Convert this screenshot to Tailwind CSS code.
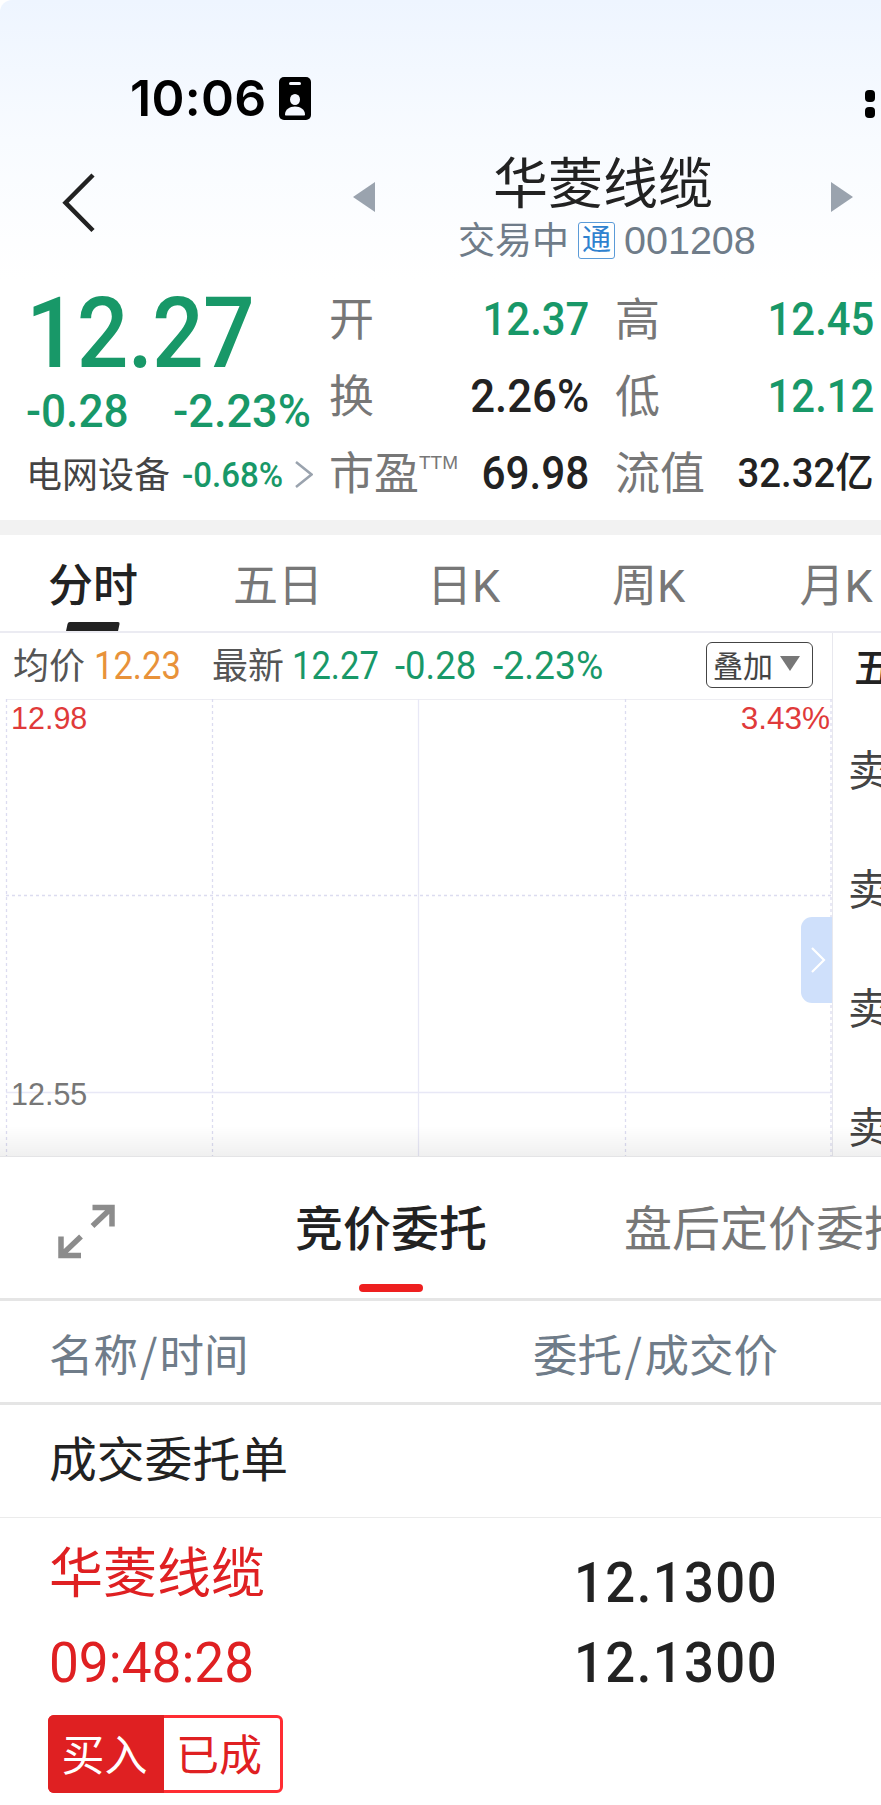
<!DOCTYPE html>
<html lang="zh-CN">
<head>
    <meta charset="UTF-8">
    <meta name="viewport" content="width=device-width, initial-scale=1.0">
    <title>华菱线缆 001208</title>
    <script src="https://cdn.jsdelivr.net/npm/@tailwindcss/browser@4"></script>
</head>
<body class="w-[881px] h-[1805px] overflow-hidden bg-white text-[#222] leading-none whitespace-nowrap font-['Roboto','Noto_Sans_CJK_SC',sans-serif]">

    <!-- Header -->
    <header class="h-[280px] rounded-tl-[12px] bg-linear-to-b from-[#eef5ff] via-[#f8fbff] via-50% to-white">
        <!-- Status bar -->
        <div class="h-[150px] pt-[46px] pl-[130px] pr-[6px] flex items-center text-black">
            <span class="w-[149px] text-[50px] font-semibold font-['Inter',sans-serif] tracking-[0.3px]">10:06</span>
            <svg class="w-8 h-[43px]" viewBox="0 0 32 43">
                <rect width="32" height="43" rx="5"></rect>
                <rect x="10" y="5" width="12" height="3" rx="1.5" fill="#f5f8ff"></rect>
                <ellipse cx="16" cy="22.5" rx="5" ry="5.5" fill="#f5f8ff"></ellipse>
                <path d="M6 37.5c0-5 4.500-8 10-8s10 3 10 8c0 .6-.4 1-1 1H7c-.6 0-1-.4-1-1z" fill="#f5f8ff"></path>
            </svg>
            <div class="ml-auto mt-[12px] flex flex-col gap-[5px]">
                <i class="w-[10px] h-3 rounded-[4px] bg-black"></i>
                <i class="w-[10px] h-[11px] rounded-[4px] bg-black"></i>
            </div>
        </div>
        <!-- Title -->
        <div class="h-[120px] flex">
            <svg class="mt-[23px] ml-[61px] w-[34px] h-[60px]" viewBox="0 0 34 60" fill="none" stroke="#222" stroke-width="4.500">
                <path d="M32 2 4.500 29.700 32 57.500"></path>
            </svg>
            <svg class="mt-8 ml-[258px] w-[22px] h-[30px]" viewBox="0 0 22 30"><path d="M22 0v30L0 15z" fill="#9aa3ae"></path></svg>
            <div class="w-[456px] pl-[83px]">
                <h1 class="mt-[7px] pl-[35px] text-[55px]">华菱线缆</h1>
                <div class="mt-[9px] flex items-center text-[37px] text-[#6f7c89]">
                    <span class="mt-[2px]">交易中</span>
                    <span class="ml-[9px] w-[37px] h-[37px] border border-[#5b9bd8] rounded-[3px] bg-white flex items-center justify-center text-[29px] text-[#2f82cf]">通</span>
                    <span class="ml-[9px] text-[39.500px] font-['Liberation_Sans',sans-serif]">001208</span>
                </div>
            </div>
            <svg class="mt-8 w-[22px] h-[30px]" viewBox="0 0 22 30"><path d="M0 0v30l22-15z" fill="#9aa3ae"></path></svg>
        </div>
    </header>

    <!-- Quote -->
    <section class="h-[240px] flex text-[#189868]">
        <div class="w-[329px] pl-[26px]">
            <div class="mt-[4px] text-[99px] font-medium tracking-[-1px] origin-left scale-x-[.92]">12.27</div>
            <div class="mt-[5px] flex text-[46px] font-medium">
                <span class="w-[147px] origin-left scale-x-[.96]">-0.28</span>
                <span class="origin-left scale-x-[.98]">-2.23%</span>
            </div>
            <div class="mt-[24px] flex items-center text-[36px] text-[#444]">
                <span>电网设备</span>
                <span class="-mt-[2px] ml-[12px] w-[113px] text-[35px] font-medium text-[#189868] origin-left scale-x-[.945]">-0.68%</span>
                <svg class="-mt-1 w-[18px] h-[27px]" viewBox="0 0 18 27" fill="none" stroke="#9aa3ae" stroke-width="2.500"><path d="M1 1l15.500 12.500L1 26"></path></svg>
            </div>
        </div>
        <div class="grid grid-cols-[260px_26px_259px] grid-rows-[77px_77px_77px] items-center text-[46px] font-medium">
            <div class="flex items-center justify-between">
                <span class="mt-[4px] text-[45px] font-normal text-[#777]">开</span>
                <span class="origin-right scale-x-[.91]">12.37</span>
            </div>
            <i></i>
            <div class="flex items-center justify-between">
                <span class="mt-[4px] text-[45px] font-normal text-[#777]">高</span>
                <span class="origin-right scale-x-[.91]">12.45</span>
            </div>
            <div class="flex items-center justify-between">
                <span class="mt-[4px] text-[45px] font-normal text-[#777]">换</span>
                <span class="text-[#222] origin-right scale-x-[.95]">2.26%</span>
            </div>
            <i></i>
            <div class="flex items-center justify-between">
                <span class="mt-[4px] text-[45px] font-normal text-[#777]">低</span>
                <span class="origin-right scale-x-[.91]">12.12</span>
            </div>
            <div class="flex items-center">
                <span class="mt-[4px] text-[45px] font-normal text-[#777]">市盈</span>
                <span class="mb-5 text-[19px] font-normal text-[#777] font-['Liberation_Sans',sans-serif]">TTM</span>
                <span class="ml-auto text-[#222] origin-right scale-x-[.92]">69.98</span>
            </div>
            <i></i>
            <div class="flex items-center justify-between">
                <span class="mt-[4px] text-[45px] font-normal text-[#777]">流值</span>
                <span class="mt-[2px] text-[41px] text-[#222] origin-right scale-x-[.935]">32.32亿</span>
            </div>
        </div>
    </section>
    <div class="h-[15px] bg-[#f2f2f2]"></div>

    <!-- Period tabs -->
    <nav class="h-[98px] grid grid-cols-[repeat(5,186px)] border-b-2 border-[#ebebf2] text-[45px] text-[#777] text-center">
        <div class="flex flex-col items-center font-medium text-[#222]">
            <span class="mt-[29px]">分时</span>
            <i class="mt-[13px] w-[52px] h-[9px] rounded-t-[2px] -skew-x-12 bg-[#222]"></i>
        </div>
        <span class="mt-[29px] mr-[2px]">五日</span>
        <span class="mt-[29px] mr-[3px]">日K</span>
        <span class="mt-[29px] mr-[5px]">周K</span>
        <span class="mt-[29px] mr-[2px]">月K</span>
    </nav>

    <div class="h-[523px] flex overflow-hidden">
        <!-- Chart -->
        <div class="w-[832px] shrink-0">
            <div class="h-[66px] pl-[13px] flex items-center text-[38px] text-[#189868]">
                <span class="mt-[2px] text-[36px] text-[#555]">均价</span>
                <span class="ml-[9px] w-[118px] text-[#e8923a] origin-left scale-x-[.91]">12.23</span>
                <span class="mt-[2px] text-[36px] text-[#555]">最新</span>
                <span class="ml-[8px] w-[103px] origin-left scale-x-[.91]">12.27</span>
                <span class="w-[98px] origin-left scale-x-[.96]">-0.28</span>
                <span class="origin-left scale-x-[.98]">-2.23%</span>
                <div class="ml-auto mb-[2px] mr-[19px] w-[107px] h-[46px] pl-[6px] border border-[#444] rounded-[6px] flex items-center gap-[7px] text-[30px] text-[#444]">
                    <span class="mt-[3px]">叠加</span>
                    <svg class="-mt-1 w-5 h-[15px]" viewBox="0 0 20 15"><path d="M0 0h20L10 15z" fill="#777"></path></svg>
                </div>
            </div>
            <div class="relative h-[457px] font-['Liberation_Sans',sans-serif] text-[30.500px]">
                <svg class="absolute inset-0 w-[832px] h-[457px]" viewBox="0 0 832 457" fill="none" stroke="#dcdcf0" stroke-width="1.300">
                    <path d="M6 .5h826" stroke="#ededf2" stroke-width="1"></path>
                    <path d="M6.500 0v457M212.500 0v457M625.500 0v457M831 0v457M6 196.500h826" stroke-dasharray="3 3"></path>
                    <path d="M418.500 0v457M6 393.500h826" stroke="#e8e8f6"></path>
                </svg>
                <span class="absolute left-[11px] top-[4px] text-[#e03a3a]">12.98</span>
                <span class="absolute right-[2px] top-[4px] text-[31.500px] text-[#e03a3a]">3.43%</span>
                <span class="absolute left-[11px] top-[380px] text-[#777]">12.55</span>
                <div class="absolute right-0 top-[218px] w-[31px] h-[86px] rounded-l-[11px] bg-[#cfe0fb] flex items-center justify-center">
                    <svg class="ml-1 w-[15px] h-[26px]" viewBox="0 0 15 26" fill="none" stroke="#fff" stroke-width="2.200"><path d="M1 1l12 12L1 25"></path></svg>
                </div>
            </div>
        </div>
        <!-- Order book -->
        <div class="w-[49px] border-l border-[#e8e8ee] pl-[15px] overflow-hidden text-[42px] text-[#444]">
            <div class="h-[78px] pt-[16px] pl-[6px] text-[40px] font-medium text-[#222]">五</div>
            <div class="h-[119px] pt-[40px]">卖</div>
            <div class="h-[119px] pt-[40px]">卖</div>
            <div class="h-[119px] pt-[40px]">卖</div>
            <div class="h-[119px] pt-[40px]">卖</div>
        </div>
    </div>

    <!-- Orders -->
    <section class="relative bg-white border-t border-[#e4e4e6]">
        <div class="absolute inset-x-0 -top-[31px] h-[30px] bg-linear-to-b from-transparent to-black/6"></div>
        <div class="h-[144px] flex overflow-hidden border-b-3 border-[#e5e5e5] text-[48px] text-[#777]">
            <svg class="mt-[47px] ml-[57px] w-[60px] h-[56px] shrink-0" viewBox="0 0 60 56" fill="none" stroke="#8c8c8c" stroke-width="5.500">
                <path d="M35.500 3.500h19.500v19M55 3.500 35.500 22M4 32.500V51.500h20M4 51.500l20-19"></path>
            </svg>
            <div class="ml-[178px] w-[192px] flex flex-col items-center font-medium text-[#222]">
                <span class="mt-[49px]">竞价委托</span>
                <i class="mt-[30px] w-16 h-2 rounded-full bg-[#ee1f1f]"></i>
            </div>
            <span class="mt-[49px] ml-[137px]">盘后定价委托</span>
        </div>
        <div class="h-[104px] pt-[8px] px-[49px] flex items-center border-b-3 border-[#e5e5e5] text-[44.500px] text-[#6f7c89]">
            <span class="w-[484px]">名称<span class="mx-[2px] font-['Noto_Sans_CJK_SC',sans-serif]">/</span>时间</span>
            <span>委托<span class="mx-[2.500px] font-['Noto_Sans_CJK_SC',sans-serif]">/</span>成交价</span>
        </div>
        <div class="h-[113px] pt-[2px] px-[49px] flex items-center border-b border-[#ebebeb] text-[47.800px]">成交委托单</div>
        <div class="pl-[48px] pr-[103px] flex justify-between">
            <div class="text-[#df2022]">
                <div class="mt-[30px] pl-px text-[54px]">华菱线缆</div>
                <div class="mt-[33px] pl-px text-[56px] origin-left scale-x-[.95]">09:48:28</div>
                <div class="mt-[24px] w-[235px] h-[78px] flex items-center border-3 border-[#ff2d33] rounded-[6px] text-[43px]">
                    <span class="-m-[3px] w-[116px] h-[78px] pt-[4px] pr-[3px] rounded-l-[6px] bg-[#df2022] text-white flex items-center justify-center">买入</span>
                    <span class="mt-[4px] ml-[15px]">已成</span>
                </div>
            </div>
            <div class="text-right text-[56px] font-medium tracking-[1.500px]">
                <div class="mt-[37px] origin-right scale-x-[.94]">12.1300</div>
                <div class="mt-[24px] origin-right scale-x-[.94]">12.1300</div>
            </div>
        </div>
    </section>

</body>
</html>
